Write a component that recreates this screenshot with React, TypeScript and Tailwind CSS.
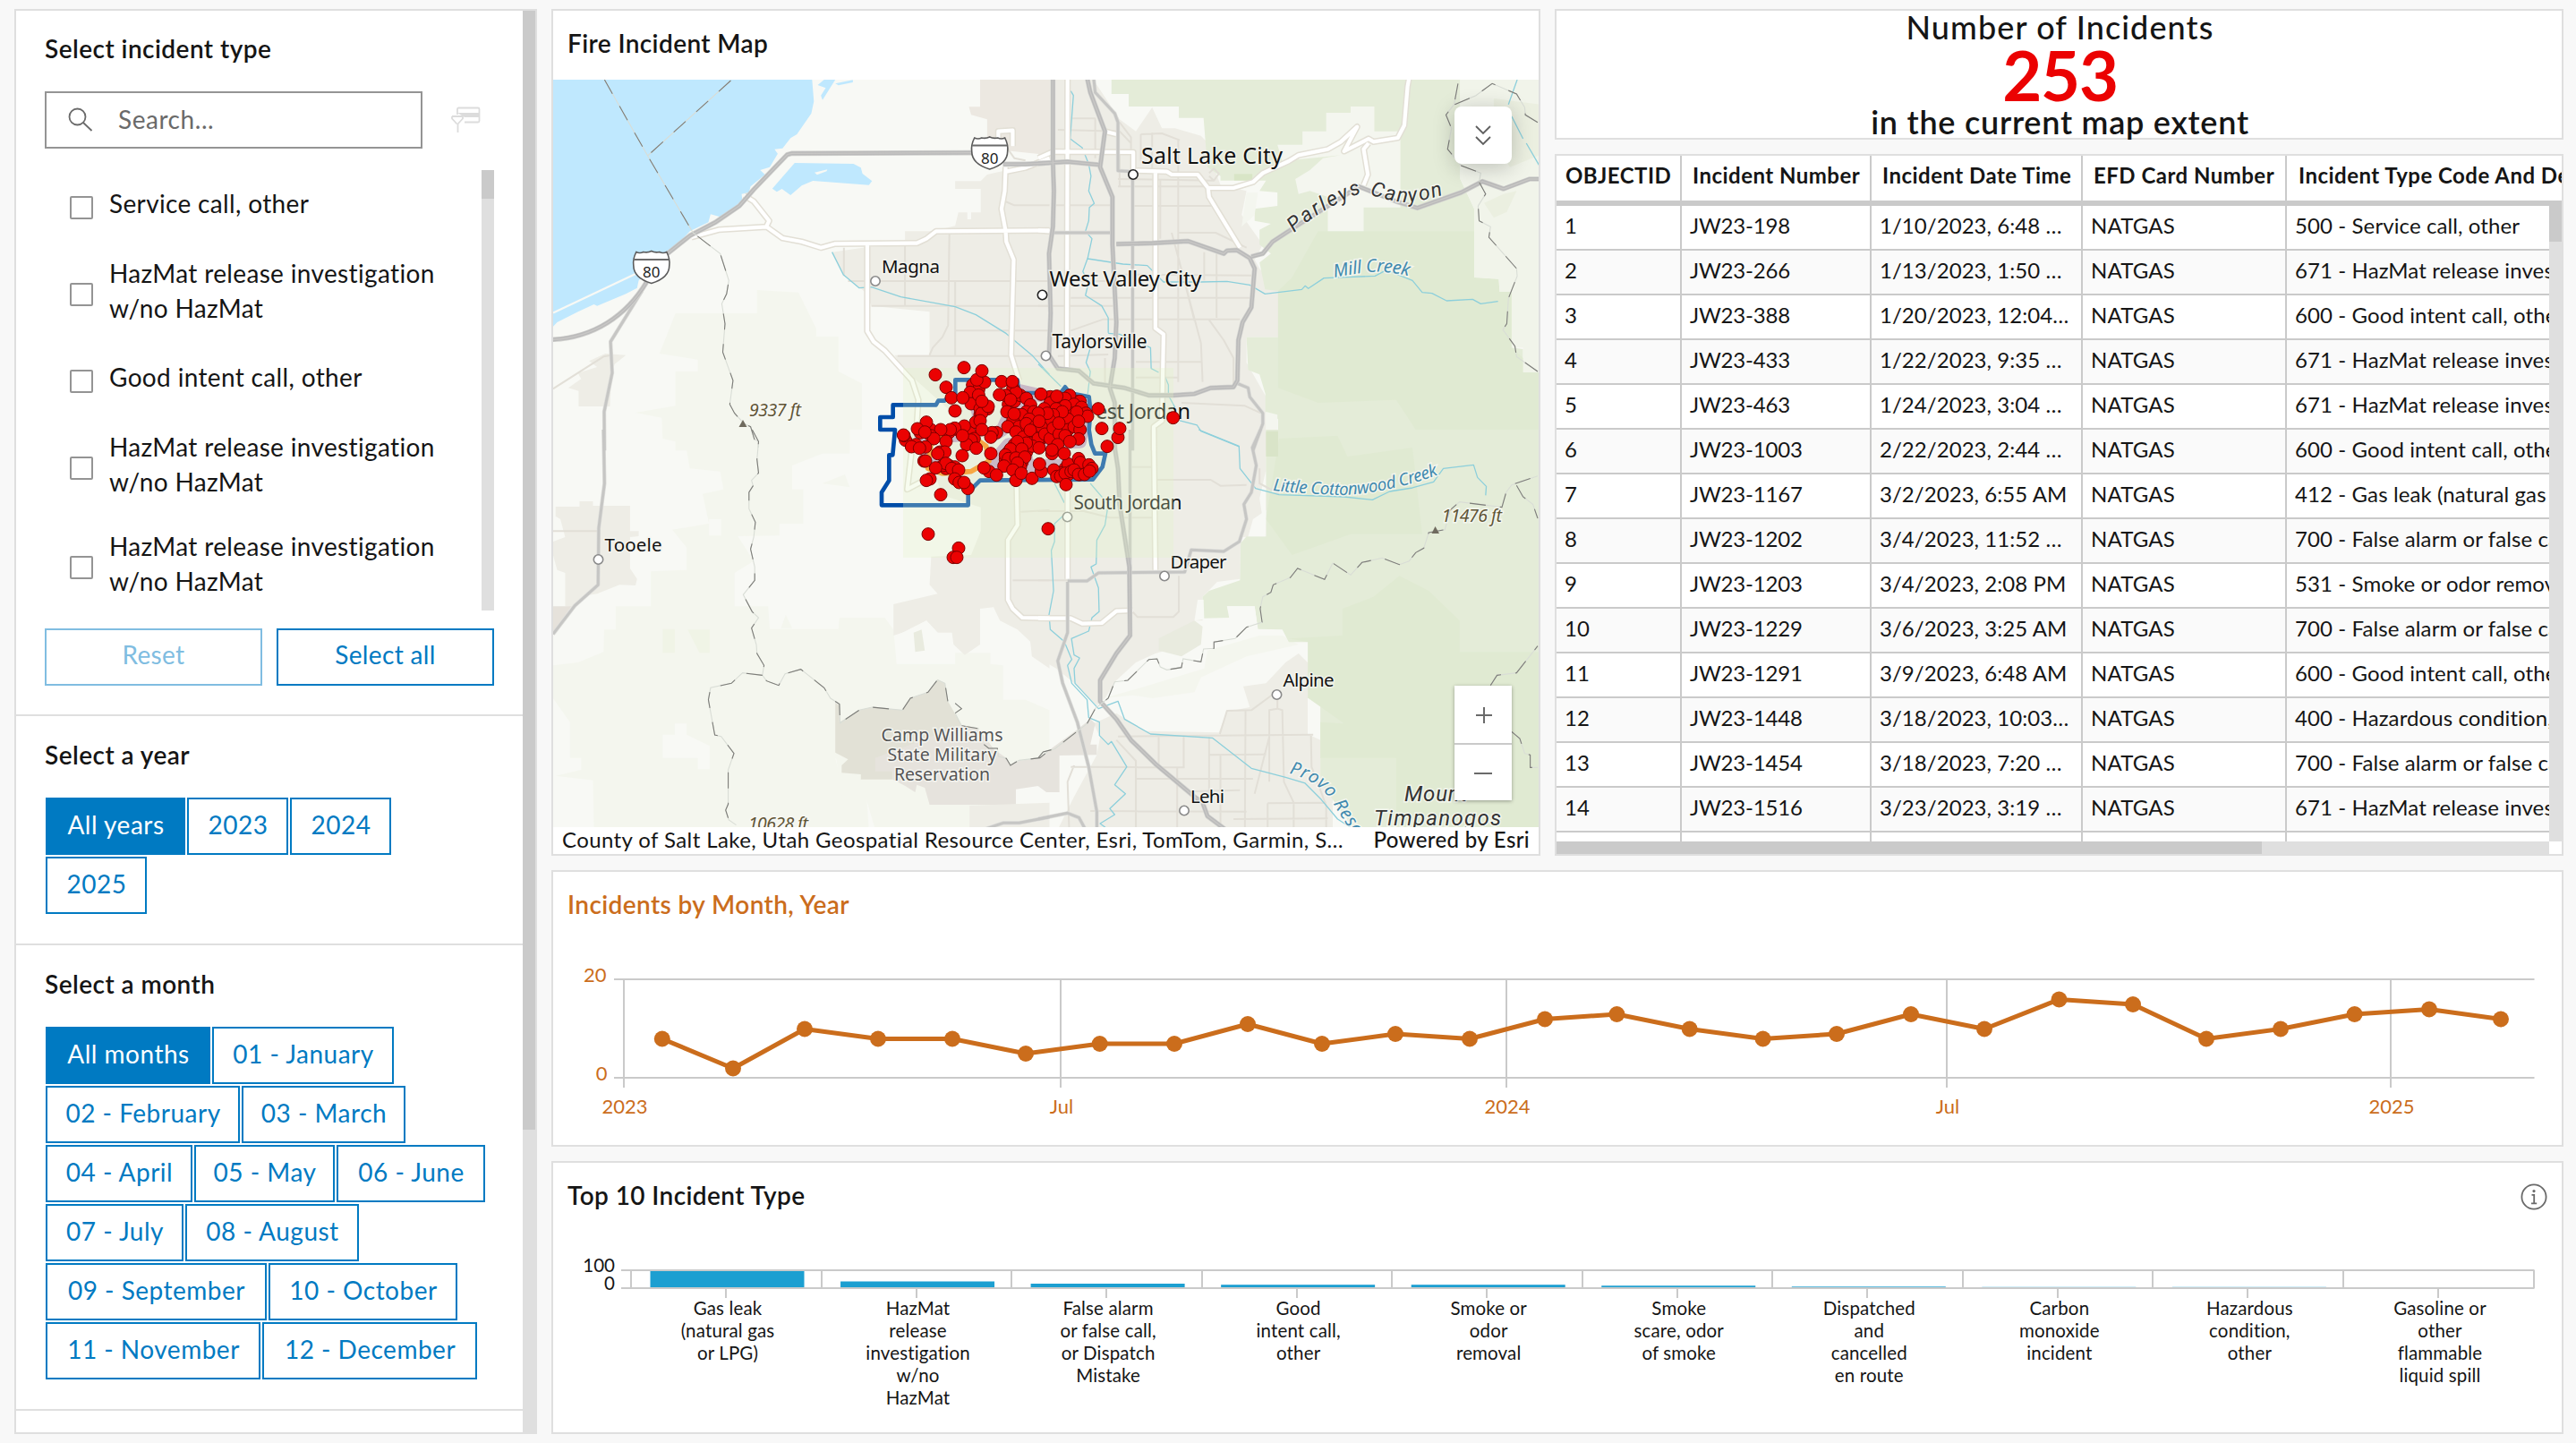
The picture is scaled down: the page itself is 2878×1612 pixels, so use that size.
import type { ReactNode } from "react";
import clsx from "clsx";

const FONT = "font-['Lato','Open_Sans',sans-serif]";

/* ---------- Sidebar ---------- */

const incidentTypes = [
  "Service call, other",
  "HazMat release investigation w/no HazMat",
  "Good intent call, other",
  "HazMat release investigation w/no HazMat",
  "HazMat release investigation w/no HazMat",
];

const yearRows: [string, string][][] = [
  [["All years", "w-[156px]"], ["2023", "w-[113px]"], ["2024", "w-[113px]"]],
  [["2025", "w-[113px]"]],
];

const monthRows: [string, string][][] = [
  [["All months", "w-[184px]"], ["01 - January", "w-[203px]"]],
  [["02 - February", "w-[217px]"], ["03 - March", "w-[183px]"]],
  [["04 - April", "w-[164px]"], ["05 - May", "w-[157px]"], ["06 - June", "w-[166px]"]],
  [["07 - July", "w-[154px]"], ["08 - August", "w-[194px]"]],
  [["09 - September", "w-[247px]"], ["10 - October", "w-[211px]"]],
  [["11 - November", "w-[240px]"], ["12 - December", "w-[240px]"]],
];

function SectionTitle({ children }: { children: ReactNode }) {
  return <h2 className="h-10 text-[28px] leading-10 font-semibold tracking-[0.45px] whitespace-nowrap">{children}</h2>;
}

function PillRows({ rows }: { rows: [string, string][][] }) {
  return (
    <div className="mt-7 ml-px flex flex-col gap-0.5">
      {rows.map((row, i) => (
        <div key={i} className="flex gap-0.5">
          {row.map(([label, width], j) => (
            <button
              key={label}
              className={clsx(
                "flex h-16 items-center justify-center border-2 border-[#007ac2] pb-1 pl-px text-[28px] leading-9 tracking-[0.5px] whitespace-nowrap",
                width,
                i === 0 && j === 0 ? "bg-[#007ac2] text-white" : "bg-white text-[#007ac2]",
              )}
            >
              {label}
            </button>
          ))}
        </div>
      ))}
    </div>
  );
}

function Sidebar() {
  return (
    <aside className="flex h-[1592px] w-[584px] shrink-0 border-2 border-[#dfdfdf] bg-white">
      <div className="flex min-w-0 flex-1 flex-col">
        <section className="h-[788px] border-b-2 border-[#dfdfdf] px-8 pt-[22px]">
          <SectionTitle>Select incident type</SectionTitle>
          <div className="mt-7 flex items-center">
            <div className="flex h-16 w-[422px] items-center border-2 border-[#949494] pl-6">
              <svg width="28" height="28" viewBox="0 0 28 28" fill="none" stroke="#6a6a6a" strokeWidth="1.8">
                <circle cx="10.5" cy="10.5" r="9" />
                <path d="M17 17 L26.5 26" />
              </svg>
              <span className="ml-7 pb-0.5 text-[28px] leading-9 tracking-[0.55px] text-[#6a6a6a]">Search...</span>
            </div>
            <svg className="ml-8" width="33" height="30" viewBox="0 0 33 30" fill="none" stroke="#dcdcdc" strokeWidth="1.8">
              <path d="M7 9 V3 Q7 1.5 8.5 1.5 H30 Q31.5 1.5 31.5 3 V16 Q31.5 17.5 30 17.5 H15" />
              <path d="M7 7 H31.5 V12 H15" fill="#dcdcdc" stroke="none" />
              <path d="M1 11 H13 V13.5 L7.5 19.5 V29 M1 11 V13.5 L6.5 19.5" />
            </svg>
          </div>
          <div className="mt-6 flex h-[492px]">
            <div className="flex h-[492px] flex-1 flex-col overflow-hidden pl-7">
              {incidentTypes.map((label, i) => (
                <label key={i} className={clsx("flex shrink-0 items-center gap-[18px]", label.length > 30 ? "h-[111px]" : "h-[83px]")}>
                  <span className="size-[26px] shrink-0 rounded-[2px] border-2 border-[#949494] bg-white" />
                  <span className="w-[380px] pb-2 text-[28px] leading-[39px] tracking-[0.35px]">{label}</span>
                </label>
              ))}
            </div>
            <div className="h-full w-3.5 bg-[#dfdfdf]">
              <div className="h-8 bg-[#cacaca]" />
            </div>
          </div>
          <div className="mt-5 flex gap-4">
            <button className="h-16 w-[243px] border-2 border-[#80bde1] pb-1.5 text-[28px] leading-9 tracking-[0.35px] text-[#80bde1]">Reset</button>
            <button className="h-16 w-[243px] border-2 border-[#007ac2] pb-1.5 text-[28px] leading-9 tracking-[0.35px] text-[#007ac2]">Select all</button>
          </div>
        </section>
        <section className="h-64 border-b-2 border-[#dfdfdf] pt-[23px] pl-8">
          <SectionTitle>Select a year</SectionTitle>
          <PillRows rows={yearRows} />
        </section>
        <section className="h-[520px] border-b-2 border-[#dfdfdf] pt-[23px] pl-8">
          <SectionTitle>Select a month</SectionTitle>
          <PillRows rows={monthRows} />
        </section>
      </div>
      <div className="w-3.5 bg-[#dfdfdf]">
        <div className="h-[1250px] bg-[#cacaca]" />
      </div>
    </aside>
  );
}

/* ---------- Map ---------- */

type Tile = {
  transform: string;
  areas: [string, string][];
  minor: string;
  white: string;
  state: string;
  highway: string;
  stream: string;
  boundary: string;
};

const URBAN = "#eeede6";
const PALE = "#f4f6ee";
const FOREST = "#e4ecd8";
const FOREST_DARK = "#e0ead2";
const BARE = "#f8f9f5";

const tiles: Tile[] = [
  {
    transform: "translate(610 0) scale(0.35714 0.33333)",
    areas: [
      [URBAN, "M1280,607 1360,607 1380,585 1420,575 1575,550 1575,1510 1400,1510 1330,1440 1117,1235 1090,1190 1200,1190 1200,1045 1060,1030 1018,1025 1000,980 930,920 895,845 1005,828 1123,822 1123,775 1210,775 1280,757 1290,712 1318,712 1318,735 1330,735 1330,712 1360,712 1360,633 1280,633Z"],
      ["#ece8e1", "M1358,267 1575,267 1575,520 1400,500 1380,480 1380,400 1330,385 1323,358 1358,358Z"],
      [PALE, "M405,1050 660,1050 660,972 790,980 845,1100 845,1128 915,1128 915,1245 988,1285 988,1440 950,1440 950,1510 405,1510 405,1480 365,1470 362,1400 280,1383 405,1360 405,1245 475,1245 475,1205 355,1185Z"],
      [URBAN, "M70,1300 110,1270 100,1250 160,1230 135,1210 185,1185 250,1190 215,1220 205,1250 200,1362 102,1362 102,1310Z"],
      ["#bfe8fe", "M22,260 832,260 838,340 830,380 785,450 765,463 740,497 715,500 725,515 700,560 670,570 685,585 640,625 635,645 612,650 615,680 550,728 515,718 508,745 450,775 390,845 290,940 285,965 250,985 160,1025 150,1020 100,1045 35,1080 22,1095Z"],
      ["#bfe8fe", "M708,632 778,546 962,549 985,562 990,582 1020,607 1010,620 835,606 800,622 765,654 738,633 722,643Z"],
      ["#bfe8fe", "M850,285 870,267 905,267 865,335 860,320 875,295Z M905,280 960,268 960,276 915,286Z"],
      [BARE, "M840,578 880,568 878,574 848,586Z"],
    ],
    minor: "M932,830 932,925 M1123,825 1123,1025 M945,942 1575,942 M1018,1025 1575,1025 M1262,780 1258,1090 1240,1130 1210,1165 1200,1190 M1280,942 1280,1190 M1280,1108 1575,1108 M1100,1193 1575,1193 M1437,675 1465,688 1575,688 M22,1303 180,1195 205,1190 M1445,500 1465,530 1500,538",
    white: "M455,795 540,770 690,760 740,798 800,810 860,830 905,817 1160,815 1190,800 1220,775 1575,772 M620,655 650,675 698,740 690,758 M1438,560 1435,640 1425,700 1438,775 1440,810 1463,870 1455,1190 1480,1275 M1005,820 1005,1110 1025,1145 1060,1175 1145,1275 1165,1340 1160,1420 1150,1510 M1415,480 1415,440 1460,437 1460,490 M1440,575 1500,562 1575,530",
    state: "M300,975 202,1145 207,1250 182,1380 183,1510",
    highway: "M22,1138 C150,1130 250,1060 315,945 M380,850 L450,790 530,745 605,690 650,635 755,518 770,514 1335,512 M1430,550 1500,550 1575,546",
    stream: "M895,845 930,920 980,965 1018,962 1110,995 1280,1028 1345,1055 1440,1118 1520,1190 1575,1255",
    boundary: "M183,267 318,522 460,780 505,817 545,850 572,940 565,985 550,1018 560,1085 553,1180 585,1275 575,1355 590,1385 620,1420 640,1430 652,1472 665,1480 664,1500 M578,270 318,522",
  },
  {
    transform: "translate(1160 0) scale(0.3635 0.33333)",
    areas: [
      [URBAN, "M0,260 165,260 250,400 300,440 350,360 380,430 420,430 500,455 540,500 540,560 560,620 640,640 625,720 690,820 665,870 680,900 737,975 737,1130 640,1130 640,1215 700,1330 700,1510 0,1510Z"],
      ["#ece8e1", "M0,260 35,260 35,520 0,535Z"],
      [FOREST, "M225,260 1297,260 1297,600 1340,700 1340,930 1415,935 1418,978 1455,978 1455,1165 1490,1170 1490,1248 1540,1248 1540,1510 700,1510 700,1450 737,1450 737,1405 698,1380 698,1320 680,1255 645,1240 640,1130 737,1130 737,975 697,970 680,880 715,850 680,820 680,770 715,750 665,740 665,700 735,690 735,645 680,640 700,605 560,605 560,590 520,560 508,395 432,395 432,357 278,357 278,315 225,315Z"],
      [FOREST_DARK, "M860,775 1340,775 1340,930 1415,935 1418,978 1455,978 1455,1165 1540,1250 1540,1510 1280,1510 1160,1440 1100,1340 860,1350 737,1300 737,975 780,930Z"],
      ["#f4f6ef", "M885,378 960,378 960,357 1033,357 1033,440 1113,440 1113,695 1000,695 1000,775 890,775 890,660 835,640 800,650 790,600 835,570 875,530 930,520 750,540 735,485 812,485 812,440 885,440Z"],
      ["#f1f4ea", "M1297,260 1540,260 1540,1248 1490,1248 1490,1165 1455,1165 1455,978 1418,978 1415,935 1340,930 1340,700 1297,600Z"],
      ["#ebefe0", "M1400,330 1540,350 1540,520 1450,560 1400,480Z M1370,680 1430,650 1470,640 1440,710 1400,730Z"],
      ["#d8e5c6", "M602,583 658,583 658,605 602,605Z"],
      ["#f4f6ef", "M640,645 675,645 665,720 625,760Z M700,1380 735,1390 735,1450 700,1450Z"],
    ],
    minor: "M55,688 228,688 M245,625 510,625 M290,690 540,690 M375,600 375,800 M430,590 430,1280 M430,780 545,780 640,830 M510,845 510,940 M548,850 548,1065 M235,920 655,923 M100,998 650,998 M0,1025 230,1025 M100,1108 200,1070 620,1070 M430,860 480,1075 M410,780 500,1150 505,1280 M525,1072 570,1140 600,1200 600,1290 M60,1193 215,1188 M300,1213 505,1213 M300,1265 430,1265 M205,1200 205,1300 M105,397 175,397 M175,395 175,530 M315,450 315,540 M430,470 430,600 M350,445 350,570 M315,450 380,447 435,470 M60,435 250,440 285,480 M250,625 250,500 M245,600 540,605 M250,410 285,460 285,500 M440,1350 635,1360 685,1385 M0,942 230,942 M525,580 540,565 555,582 540,605 525,590",
    white: "M90,260 88,1235 M0,530 45,508 292,510 292,572 M300,572 395,575 410,585 490,585 522,630 600,630 660,610 690,580 770,540 800,520 890,500 930,475 980,425 940,507 1015,465 1030,475 1105,462 1125,420 1135,290 1140,260 M522,630 525,660 620,830 M360,575 360,1100 385,1120 380,1410 355,1430 355,1510 M0,772 35,775 M1015,480 1000,500 1013,585 1000,620 M205,440 240,450",
    state: "M170,260 175,310 235,380 245,410 245,572 290,575 290,1510 M40,780 220,780 M612,1285 645,1300 650,1330 690,1385 690,1420 660,1510",
    highway: "M150,260 160,310 205,440 190,560 228,660 228,820 240,1080 235,1200 220,1300 235,1350 235,1510 M45,260 45,540 48,640 45,760 33,850 38,1050 33,1190 60,1235 125,1243 170,1285 265,1300 340,1325 415,1325 480,1320 530,1300 600,1297 612,1275 615,1140 628,1080 655,1030 665,900 650,865 610,838 580,840 570,850 460,808 350,815 240,818 M0,548 90,542 185,552 M655,860 690,850 720,810 790,760 985,625 1100,675 1165,697 1300,645 1365,608 1430,633 1510,600 1540,600",
    stream: "M100,305 108,320 98,465 135,495 155,550 162,590 155,640 172,682 157,695 155,740 145,775 165,800 152,865 137,910 155,945 145,990 195,1025 215,1065 215,1115 M152,867 260,885 335,890 385,945 500,945 580,943 650,955 697,985 810,970 820,958 830,967 878,932 1035,925 1070,905 1150,940 1180,980 1210,983 1255,1008 1335,1003 1360,1018 1413,1010 M215,1117 250,1120 345,1165 347,1235 370,1248 M0,1220 70,1295 M160,1165 147,1215 160,1245 152,1320 M385,1250 400,1290 400,1325 420,1365 M435,1410 488,1425 500,1445 617,1497 M1472,267 1445,350 M1455,390 1490,465 M1500,480 1540,555",
    boundary: "M1290,280 1278,350 1253,385 1270,430 1258,500 1300,555 1360,580 1355,610 1375,650 1352,690 1355,740 1390,760 1385,795 1470,900 1472,925 1445,1000 1440,1085 1428,1105 1465,1160 1470,1195 1535,1245 M1280,350 1345,320 1395,280 1470,315 1495,360 1497,385 1535,410",
  },
  {
    transform: "translate(610 480) scale(0.35714 0.33333)",
    areas: [
      [PALE, "M22,790 100,780 180,745 182,670 218,670 218,592 328,592 328,475 440,470 440,395 395,335 510,315 490,215 555,200 545,140 450,130 440,70 405,40 405,0 950,0 950,80 865,80 770,120 770,200 805,200 805,315 730,315 730,355 600,357 650,440 590,480 590,592 695,592 700,668 915,668 918,630 1060,630 1087,670 1097,785 1280,785 1280,748 1390,748 1390,785 1430,790 1430,905 1500,905 1575,940 1575,1140 1470,1200 1470,1260 1330,1300 1330,1340 1030,1340 990,1195 905,1100 960,1340 150,1340 147,1175 30,1160 110,1140 110,1100 75,1100 75,980 22,900Z"],
      [BARE, "M365,1022 403,1022 403,985 440,985 440,1022 512,1060 512,1138 475,1138 475,1100 365,1100Z M510,300 548,300 548,355 510,355Z"],
      [PALE, "M735,665 750,620 770,665Z M865,180 935,150 950,193Z M905,1080 1000,1180 1010,1340 940,1340Z"],
      ["#f0f4e6", "M365,668 403,668 403,748 365,748Z M443,670 512,670 512,748 480,748Z M1125,705 1170,650 1255,722 1160,745Z"],
      [URBAN, "M30,258 105,258 105,240 147,240 147,255 263,255 263,340 290,340 290,357 263,360 263,465 285,500 280,522 230,520 160,550 130,555 85,595 60,592 60,480 35,470 22,420 22,375 60,360 45,300 30,290Z"],
      ["#e6e2db", "M22,592 80,592 22,680Z"],
      [URBAN, "M1330,0 1575,0 1575,800 1520,760 1515,710 1475,670 1420,640 1400,595 1358,600 1358,720 1310,755 1275,720 1270,680 1225,680 1190,640 1130,675 1087,690 1087,585 1225,550 1200,520 1205,425 1330,420 1360,340 1360,260 1240,220 1200,100Z"],
      [BARE, "M1097,690 1190,640 1225,680 1270,690 1280,785 1097,785Z"],
      ["#e9ebdf", "M1150,680 1175,670 1185,740 1155,745Z"],
      ["#e2e1d6", "M905,915 918,925 918,980 980,940 1020,930 1115,940 1140,900 1195,880 1225,838 1248,850 1257,910 1300,990 1355,1005 1400,1070 1085,1100 1085,1172 985,1172 985,1155 925,1150 925,1125 945,1105 905,1082Z"],
      ["#e6e3dd", "M1030,1100 1300,990 1355,1005 1400,1070 1440,1100 1453,1125 1480,1110 1545,1100 1575,1085 1575,1190 1535,1195 1470,1205 1470,1257 1200,1257 1185,1200 1160,1190 1155,1215 1125,1195 1085,1172 1085,1145 1030,1145Z"],
      [URBAN, "M1325,1260 1575,1250 1575,1340 1325,1340Z"],
    ],
    minor: "M22,340 160,340 M1485,275 1575,270 M1460,505 1575,505",
    white: "M1472,180 1475,320 1445,370 1445,570 1460,600 1490,630 1575,632 M1145,60 1130,200 1200,160",
    state: "M180,0 183,180 165,330 163,520 90,590 22,685 M1370,1340 1430,1318 1480,1318 1575,1298",
    highway: "",
    stream: "",
    boundary: "M645,0 665,40 660,100 665,145 643,170 648,188 635,210 635,265 655,310 650,360 640,400 653,460 653,505 617,553 645,610 665,630 643,665 658,720 660,750 682,790 677,823 690,842 728,857 748,818 797,803 870,865 890,900 918,920 920,983 980,940 1020,930 1115,940 1140,900 1195,880 1225,838 1248,850 1257,910 M1280,917 1300,935 1280,950 1300,992 1355,1002 M1370,1055 1385,1068 1412,1068 1415,1095 1440,1102 1453,1125 1480,1108 1545,1100 1568,1080 M677,823 615,815 580,850 515,865 508,905 528,1023 548,1028 588,1085 570,1140 570,1255 562,1275 572,1308 595,1325",
  },
  {
    transform: "translate(1160 480) scale(0.3635 0.33333)",
    areas: [
      [URBAN, "M0,0 700,0 700,135 680,230 698,358 622,360 620,500 550,510 505,560 505,640 480,640 455,720 360,750 300,780 240,840 205,900 180,925 100,840 55,800 0,765Z"],
      [PALE, "M200,900 330,860 510,800 520,740 680,690 750,690 800,720 640,760 500,830 480,880 350,900 290,890Z"],
      [URBAN, "M170,985 240,950 330,1010 555,1015 580,945 650,930 630,860 700,850 760,780 800,750 828,780 828,1020 867,1040 867,1180 905,1230 905,1340 60,1340 110,1230 180,1090 190,1030Z"],
      ["#e6e3dd", "M0,1100 120,1005 160,970 175,985 160,1055 180,1055 180,1090 65,1092 65,1215 25,1215 0,1195Z"],
      [FOREST, "M700,0 1540,0 1540,1340 970,1340 905,1240 867,1180 867,900 828,900 828,712 770,712 750,670 675,668 665,592 580,592 590,630 505,632 505,560 525,540 620,505 622,380 640,358 700,358Z"],
      [FOREST_DARK, "M770,700 935,690 935,600 1030,560 1110,490 1200,540 1295,640 1295,745 1540,745 1540,1340 1100,1340 1100,1100 867,1100 867,980 940,985 830,900 830,712Z"],
      [FOREST_DARK, "M740,30 920,20 950,90 1150,60 1180,350 960,350 780,420 700,300Z"],
      ["#d9e4c8", "M700,5 737,5 737,90 700,90Z"],
      [BARE, "M480,640 510,635 508,570 490,570Z M580,592 665,592 675,668 590,650Z M700,270 660,300 645,358 698,358Z"],
      ["#e9ebdf", "M370,700 480,640 505,660 500,720 440,760 370,740Z"],
    ],
    minor: "M0,273 140,273 220,295 350,295 M285,125 350,125 M365,168 530,168 560,188 640,185 M0,505 90,505 M432,490 432,610 415,628 305,628 290,610 M245,1028 845,1022 M240,1040 300,1110 300,1340 M370,1030 370,1130 M447,1030 447,1130 M100,1130 450,1132 M95,1340 90,1180 110,1125 M300,1170 660,1170 M525,1030 525,1230 M560,1090 560,1340 M637,940 635,1340 M558,1020 580,942 655,940 720,888 M710,1180 710,940 735,935 750,940 755,1180 785,1250 785,1340 M710,1030 665,1220 M735,900 735,935 M525,1090 700,1088 M705,1252 885,1250 M705,1252 705,1340 M160,1278 640,1280 M600,1305 890,1303 M838,1022 840,1130 885,1260 885,1340 M480,1212 620,1208 M427,1130 427,1340 M680,130 680,180 740,215",
    white: "M90,195 90,500 M355,0 360,470 M0,632 100,632 135,650 195,648 240,608 290,606",
    state: "M282,0 282,470 M90,507 150,507 185,480 450,477 470,403 570,408 618,375 640,300 632,250 655,210 670,120 658,60 683,0 M90,510 90,680 60,775 75,850 120,980 155,1130 180,1280 180,1340 M0,1305 90,1285 125,1300 145,1340",
    highway: "M235,0 235,60 245,130 250,250 280,460 282,690 240,750 190,840 190,910 240,970 285,1040 360,1120 480,1230 505,1250 520,1295 575,1340",
    stream: "M493,0 617,55 620,130 668,197 740,218 940,225 1027,235 1080,207 1150,195 1215,175 1245,130 1338,118 1350,160 1377,190 1375,220 M50,180 80,245 M80,285 50,315 50,375 40,405 47,540 33,620 37,670 80,710 103,770 90,790 103,850 150,905 155,965 188,980 188,1025 215,1055 225,1045 250,1090 272,1130 235,1190 268,1220 220,1270 235,1290 190,1320 215,1340 M160,180 215,250 205,320 180,370 178,450 162,460 185,530 187,610 165,630 155,675 102,700 110,755 127,765 110,800 113,850 185,935 245,910 265,970 345,1020 535,1033 655,1135 760,1165 820,1185 870,1240 920,1305 970,1340",
    boundary: "M0,1100 15,1080 50,1070 150,985 175,935 215,900 235,845 275,840 340,770 365,768 375,795 395,805 440,797 445,768 500,778 508,735 540,733 540,712 605,700 640,662 688,645 682,600 690,560 715,545 722,520 775,495 797,465 880,502 905,447 960,487 995,445 1057,430 1110,452 1140,440 1160,412 1185,397 1200,345 1250,335 1265,270 1295,242 1425,260 1438,210 1455,185 1535,155 M1470,187 1490,225 1520,250 1535,297 M1390,857 1410,823 1470,815 1535,725 M1455,1012 1480,1035 1495,1085 1512,1090 1512,1132 1535,1132",
  },
];

const incidents =
  "640,190 655,200 670,205 650,215 690,210 700,235 715,225 735,205 745,240 670,250 655,265 690,280 710,280 725,260 640,285 620,285 600,300 585,315 610,330 640,310 560,310 540,300 550,350 575,345 600,345 520,350 500,375 530,380 560,375 540,400 510,410 545,410 490,400 500,240 530,250 500,215 520,205 540,185 395,150 385,165 400,200 395,215 405,250 400,270 415,235 430,230 300,310 330,300 370,310 385,330 240,300 205,310 190,350 270,375 300,420 320,425 290,430 690,430 700,450 720,420 740,450 765,430 700,415 675,445 740,430 380,150 400,165 372,175 375,213 400,184 405,230 410,245 432,222 411,205 420,141 394,133 411,103 351,92 255,116 291,158 309,193 347,193 321,237 515,160 525,175 490,185 477,139 513,139 470,183 507,200 560,195 574,217 640,210 609,181 620,230 705,185 690,195 662,188 740,205 720,215 745,225 760,245 765,255 710,245 729,241 685,255 700,265 690,220 660,230 680,240 650,250 637,268 630,245 560,240 585,240 600,245 545,250 570,265 495,240 515,270 519,247 535,290 560,280 590,290 610,290 603,272 498,290 525,308 550,325 573,302 600,330 622,315 640,330 650,295 670,315 700,300 720,290 690,320 740,300 735,272 669,278 735,331 706,340 665,350 646,380 646,368 580,355 560,345 530,340 603,361 507,365 545,365 490,385 500,397 525,395 555,392 540,425 530,412 485,422 515,435 525,470 543,446 579,463 610,440 604,415 687,380 652,435 662,457 675,455 690,446 693,484 710,440 735,397 741,410 720,435 735,450 770,418 780,430 755,450 772,439 435,440 418,428 460,452 441,380 460,310 445,310 441,325 390,275 405,270 411,300 352,288 320,295 305,300 273,300 375,335 360,350 346,320 392,362 345,387 240,320 250,330 291,339 225,275 195,297 220,308 155,335 150,320 148,318 175,357 222,358 202,362 287,375 263,380 217,405 222,405 280,420 290,413 256,428 310,430 333,435 320,465 335,477 364,497 351,477 237,465 225,470 273,518 231,650 333,697 315,728 327,728 633,632 801,230 813,296 867,326 873,296 831,356 1052,260"
    .split(" ")
    .map((p) => p.split(",").map(Number));

const layers: { key: "minor" | "white" | "state" | "highway" | "stream"; strokes: [string, number][] }[] = [
  { key: "minor", strokes: [["#e2dfd7", 2]] },
  { key: "stream", strokes: [["#8ccfdb", 1.3]] },
  { key: "white", strokes: [["#e2dfd5", 7.2], ["#ffffff", 4.2]] },
  { key: "state", strokes: [["#dededb", 4.4], ["#c6c6c4", 3]] },
  { key: "highway", strokes: [["#d2d2cf", 5.6], ["#bababa", 4.2], ["#c8c7c5", 1.4]] },
];

function Tiled({ children }: { children: (t: Tile) => ReactNode }) {
  return (
    <>
      {tiles.map((t) => (
        <g key={t.transform} transform={t.transform}>
          {children(t)}
        </g>
      ))}
    </>
  );
}

function Shield({ x, y }: { x: number; y: number }) {
  return (
    <g transform={`translate(${x} ${y})`}>
      <path
        d="M-17,-17 Q-13,-15 -9,-17 Q-4,-16 0,-18 Q4,-16 9,-17 Q13,-15 17,-17 Q21,-9 20,-2 C20,9 10,15 0,18 C-10,15 -20,9 -20,-2 Q-21,-9 -17,-17Z"
        fill="#fff"
        stroke="#5b5b5b"
        strokeWidth="1.6"
      />
      <path d="M-19.5,-8.5 H19.5" stroke="#6b6b6b" strokeWidth="2" />
      <text x="0" y="11.5" textAnchor="middle" fontSize="17" fill="#222">80</text>
    </g>
  );
}

const cities: [string, number, number, number, number, number, number, boolean][] = [
  ["Salt Lake City", 1275, 183, 158, 25, 1266, 195, true],
  ["West Valley City", 1172.5, 319.5, 170, 24, 1164.5, 329.5, true],
  ["Taylorsville", 1175.5, 388.5, 106, 21, 1168.5, 397.5, false],
  ["South Jordan", 1199.5, 568.5, 121, 21, 1192.5, 577.5, false],
  ["Draper", 1307.5, 634.5, 63, 20.5, 1301, 643.5, false],
  ["Alpine", 1433.5, 767, 57, 20.5, 1426.5, 776, false],
  ["Lehi", 1330, 896.5, 38, 20.5, 1323, 905.5, false],
  ["Magna", 985, 304.5, 65, 20.5, 978, 314, false],
  ["Tooele", 675.5, 616, 64, 20.5, 668.5, 625, false],
];

function BaseMap() {
  return (
    <svg className="block h-[835px] w-[1101px] font-['Noto_Sans',sans-serif]" viewBox="618 89 1101 835">
      <rect x="618" y="89" width="1101" height="835" fill={BARE} />
      <Tiled>{(t) => t.areas.map(([fill, d], i) => <path key={i} d={d} fill={fill} />)}</Tiled>
      <path d="M618,349.5 L710,306" stroke={BARE} strokeWidth="2.4" />
      {layers.map(({ key, strokes }) =>
        strokes.map(([stroke, width]) => (
          <Tiled key={key + stroke}>
            {(t) => (
              <path d={t[key]} fill="none" stroke={stroke} strokeWidth={width} strokeLinejoin="round" vectorEffect="non-scaling-stroke" />
            )}
          </Tiled>
        )),
      )}
      <Tiled>
        {(t) => <path d={t.boundary} fill="none" stroke="#d9ddd6" strokeWidth="1.1" vectorEffect="non-scaling-stroke" />}
      </Tiled>
      <Tiled>
        {(t) => (
          <path d={t.boundary} fill="none" stroke="#7d7d79" strokeWidth="1.1" strokeDasharray="18 16" vectorEffect="non-scaling-stroke" />
        )}
      </Tiled>

      <g fill="#6f6a5e">
        <path d="M830,469 L834.5,477 H825.5Z M1603.5,588 L1608,596 H1599.5Z" />
      </g>
      <Shield x={1105.7} y={171} />
      <Shield x={727.8} y={298.5} />

      <g fill="none" stroke="none">
        <path id="mill" d="M1491,310 Q1510,306 1530,304 T1580,310" />
        <path id="cottonwood" d="M1422,548 Q1460,552 1500,553 Q1550,551 1608,530" />
        <path id="provo" d="M1440,864 Q1474,872 1490,898 Q1502,920 1530,955" />
        <path id="parleys" d="M1446,260 Q1474,234 1522,215" />
        <path id="canyon" d="M1530,217 Q1556,226 1574,226 Q1592,224 1618,216" />
      </g>
      <g stroke={BARE} strokeWidth="3" strokeOpacity="0.8" paintOrder="stroke" fontStyle="italic">
        <g fill="#4189ae" fontSize="20">
          <text fontSize="20"><textPath href="#mill" textLength="84">Mill Creek</textPath></text>
          <text fontSize="19"><textPath href="#cottonwood" textLength="188">Little Cottonwood Creek</textPath></text>
          <text letterSpacing="1"><textPath href="#provo">Provo Reser</textPath></text>
        </g>
        <g fill="#333" fontSize="24" fontFamily="'Roboto','Noto Sans',sans-serif">
          <text fontSize="23"><textPath href="#parleys" textLength="88">Parleys</textPath></text>
          <text fontSize="23"><textPath href="#canyon" textLength="85">Canyon</textPath></text>
          <text x="1569" y="894.5" textLength="70">Mount</text>
          <text x="1535" y="921.5" textLength="142">Timpanogos</text>
        </g>
        <g fill="#5f5436" fontSize="19.5">
          <text x="837" y="465" textLength="58">9337 ft</text>
          <text x="836" y="927" textLength="67">10628 ft</text>
          <text x="1610.5" y="583" textLength="67.5">11476 ft</text>
        </g>
      </g>
      <g fill="#555" fontSize="19.5" textAnchor="middle" stroke={BARE} strokeWidth="3" strokeOpacity="0.8" paintOrder="stroke">
        <text x="1052.5" y="827.5" textLength="136">Camp Williams</text>
        <text x="1052.5" y="849.5" textLength="122">State Military</text>
        <text x="1052.5" y="871.5" textLength="107">Reservation</text>
      </g>
      {cities.map(([name, x, y, length, size, cx, cy, major]) => (
        <g key={name}>
          <circle cx={cx} cy={cy} r="5.2" fill="#fff" stroke={major ? "#222" : "#8a8a8a"} strokeWidth="1.6" />
          <text x={x} y={y} fontSize={size} textLength={length} fill="#111" stroke="#f5f5f0" strokeWidth="3" strokeOpacity="0.8" paintOrder="stroke">
            {name}
          </text>
        </g>
      ))}
      <text x="1330" y="467.5" textAnchor="end" fontSize="23.5" textLength="106" fill="#111">est Jordan</text>

      <g transform="translate(960 380) scale(0.33333)" fill="none" strokeLinejoin="round">
        <path
          d="M400,120 380,170 400,250 390,310 320,320 200,300 230,400 300,430 M430,330 480,300 540,170 760,220 740,340 500,350 440,420 600,420 700,420 790,440 M560,400 540,200"
          stroke="#bfa2c6"
          strokeWidth="44"
        />
        <path d="M230,430 280,447 375,440 435,405 425,355 390,330 300,300 240,350 Z" stroke="#ff8a12" strokeWidth="17" />
        <path
          d="M113,217 257,217 265,203 285,203 300,190 322,190 322,133 530,133 535,177 675,177 690,157 705,177 770,190 775,240 770,300 778,350 790,380 825,380 815,425 783,467 405,470 385,490 365,515 365,553 75,553 75,510 100,470 100,385 112,385 120,300 70,300 70,258 113,258 Z"
          stroke="#004da8"
          strokeWidth="14"
        />
      </g>
      <rect x="1009" y="411" width="302" height="212" fill="rgb(228 246 196)" fillOpacity="0.28" />
      <g fill="#eb0202" stroke="#7c0000" strokeWidth="1">
        {incidents.map(([x, y], i) => (
          <circle key={i} cx={960 + x / 3} cy={380 + y / 3} r="7" />
        ))}
      </g>
    </svg>
  );
}

function MapPanel() {
  return (
    <section className="h-[946px] w-[1105px] border-2 border-[#dfdfdf] bg-white">
      <h2 className="h-[77px] pt-4 pl-4 text-[28px] leading-10 font-semibold tracking-[0.4px]">Fire Incident Map</h2>
      <div className="relative">
        <BaseMap />
        <button className="absolute top-[30px] right-[30px] flex size-16 items-center justify-center rounded-lg bg-white shadow-[0_4px_24px_rgba(0,0,0,0.22)]">
          <svg width="18" height="24" viewBox="0 0 18 24" fill="none" stroke="#5f5f5f" strokeWidth="1.8">
            <path d="M1,2 L9,10 L17,2 M1,14 L9,22 L17,14" />
          </svg>
        </button>
        <div className="absolute right-[30px] bottom-[30px] flex h-32 w-16 flex-col bg-white shadow-[0_1px_4px_rgba(0,0,0,0.35)]">
          <button className="flex h-16 items-center justify-center pt-0.5 pl-0.5">
            <svg width="20" height="20" viewBox="0 0 20 20" stroke="#6a6a6a" strokeWidth="2">
              <path d="M1,10 H19 M10,1 V19" />
            </svg>
          </button>
          <button className="flex h-16 items-center justify-center border-t-2 border-[#cacaca] pt-0.5">
            <svg width="20" height="20" viewBox="0 0 20 20" stroke="#6a6a6a" strokeWidth="2">
              <path d="M0,10 H20" />
            </svg>
          </button>
        </div>
      </div>
      <div className="flex h-[30px] justify-between pr-2.5 pl-2.5 text-2xl leading-[27px] whitespace-nowrap">
        <span className="tracking-[0.4px]">County of Salt Lake, Utah Geospatial Resource Center, Esri, TomTom, Garmin, S…</span>
        <span className="font-medium tracking-[0.35px]">Powered by Esri</span>
      </div>
    </section>
  );
}

/* ---------- Indicator and table ---------- */

function Indicator() {
  return (
    <section className="h-[146px] border-2 border-[#dfdfdf] bg-white pl-0.5 text-center whitespace-nowrap">
      <div className="text-4xl leading-[37px] font-medium tracking-[1.1px]">Number of Incidents</div>
      <div className="text-[76px] leading-[70px] font-bold tracking-[-1.2px] text-[#eb0202]">253</div>
      <div className="text-4xl leading-[34px] font-semibold tracking-[0.75px]">in the current map extent</div>
    </section>
  );
}

const columns = ["OBJECTID", "Incident Number", "Incident Date Time", "EFD Card Number", "Incident Type Code And Description"];
const columnWidths = ["w-[140px]", "w-[212px]", "w-[236px]", "w-[228px]", "w-[440px]"];

const rows = [
  ["1", "JW23-198", "1/10/2023, 6:48 …", "NATGAS", "500 - Service call, other"],
  ["2", "JW23-266", "1/13/2023, 1:50 …", "NATGAS", "671 - HazMat release investigation"],
  ["3", "JW23-388", "1/20/2023, 12:04…", "NATGAS", "600 - Good intent call, other"],
  ["4", "JW23-433", "1/22/2023, 9:35 …", "NATGAS", "671 - HazMat release investigation"],
  ["5", "JW23-463", "1/24/2023, 3:04 …", "NATGAS", "671 - HazMat release investigation"],
  ["6", "JW23-1003", "2/22/2023, 2:44 …", "NATGAS", "600 - Good intent call, other"],
  ["7", "JW23-1167", "3/2/2023, 6:55 AM", "NATGAS", "412 - Gas leak (natural gas or LPG)"],
  ["8", "JW23-1202", "3/4/2023, 11:52 …", "NATGAS", "700 - False alarm or false call"],
  ["9", "JW23-1203", "3/4/2023, 2:08 PM", "NATGAS", "531 - Smoke or odor removal"],
  ["10", "JW23-1229", "3/6/2023, 3:25 AM", "NATGAS", "700 - False alarm or false call"],
  ["11", "JW23-1291", "3/9/2023, 6:48 AM", "NATGAS", "600 - Good intent call, other"],
  ["12", "JW23-1448", "3/18/2023, 10:03…", "NATGAS", "400 - Hazardous condition, other"],
  ["13", "JW23-1454", "3/18/2023, 7:20 …", "NATGAS", "700 - False alarm or false call"],
  ["14", "JW23-1516", "3/23/2023, 3:19 …", "NATGAS", "671 - HazMat release investigation"],
  ["", "", "", "", ""],
];

function IncidentTable() {
  return (
    <section className="flex h-[784px] flex-col border-2 border-[#dfdfdf] bg-white text-2xl whitespace-nowrap">
      <div className="flex h-14 shrink-0 overflow-hidden border-b-[6px] border-[#cacaca] leading-[44px] font-bold tracking-[0.48px]">
        {columns.map((c, i) => (
          <div key={c} className={clsx("shrink-0 border-[#cacaca]", columnWidths[i], i < 4 && "border-r-2", i === 0 ? "pl-2.5" : i === 4 ? "pl-[13px]" : "pl-3")}>
            {c}
          </div>
        ))}
      </div>
      <div className="flex h-[710px]">
        <div className="h-[710px] w-[1109px] overflow-hidden">
          {rows.map((row, r) => (
            <div key={r} className={clsx("flex h-[50px] leading-[44px]", r % 2 ? "bg-[#fafafa]" : "bg-white")}>
              {row.map((cell, i) => (
                <div
                  key={i}
                  className={clsx(
                    "shrink-0 overflow-hidden border-b-2 border-[#cacaca] pl-[9px]",
                    columnWidths[i],
                    i < 4 && "border-r-2",
                    i === 4 && "tracking-[0.1px]",
                    i === 3 && "tracking-[0.15px]",
                    i === 2 && "tracking-[0.05px]",
                    i === 1 && "tracking-[-0.2px]",
                  )}
                >
                  {cell}
                </div>
              ))}
            </div>
          ))}
        </div>
        <div className="h-[710px] w-3.5 bg-[#dfdfdf]">
          <div className="h-10 bg-[#cacaca]" />
        </div>
      </div>
      <div className="h-3.5 w-[1109px] bg-[#dfdfdf]">
        <div className="h-3.5 w-[788px] bg-[#cacaca]" />
      </div>
    </section>
  );
}

/* ---------- Charts ---------- */

const series: [number, number][] = [
  [739.8, 8], [819, 2], [899, 10], [981, 8], [1064, 8], [1146, 5], [1228.7, 7], [1312, 7], [1394, 11],
  [1477, 7], [1559, 9], [1642, 8], [1726, 12], [1806.4, 13], [1887.7, 10], [1969.6, 8], [2052, 9],
  [2135, 13], [2217, 10], [2300.5, 16], [2383, 15], [2465, 8], [2548, 10], [2630.6, 13], [2714, 14], [2794, 12],
];
const yOf = (v: number) => 1204.5 - v * 5.5;
const timeTicks: [number, string][] = [[697, "2023"], [1185, "Jul"], [1683, "2024"], [2175, "Jul"], [2671, "2025"]];

function LineChart() {
  return (
    <section className="h-[309px] border-2 border-[#dfdfdf] bg-white">
      <h2 className="h-[55px] pt-4 pl-4 text-[28px] leading-10 font-semibold tracking-[0.4px] text-[#cb6d1c]">Incidents by Month, Year</h2>
      <svg className="block h-[245px] w-[2244px]" viewBox="618 1029 2244 245">
        <g stroke="#cacaca" strokeWidth="2">
          <path d="M686,1094 H2831.5 M686,1204 H2831.5" />
          {timeTicks.map(([x]) => (
            <path key={x} d={`M${x},1094 V1215`} />
          ))}
        </g>
        <g fill="#cb6d1c" fontSize="22">
          <text x="677.5" y="1096.5" textAnchor="end">20</text>
          <text x="678.5" y="1206.5" textAnchor="end">0</text>
          {timeTicks.map(([x, label]) => (
            <text key={x} x={x + 1} y="1243.5" textAnchor="middle">{label}</text>
          ))}
        </g>
        <polyline points={series.map(([x, v]) => `${x},${yOf(v)}`).join(" ")} fill="none" stroke="#cb6d1c" strokeWidth="5" strokeLinejoin="round" />
        {series.map(([x, v]) => (
          <circle key={x} cx={x} cy={yOf(v)} r="9" fill="#cb6d1c" />
        ))}
      </svg>
    </section>
  );
}

const bars: { top: number; opacity: number; label: string[] }[] = [
  { top: 1420, opacity: 1, label: ["Gas leak", "(natural gas", "or LPG)"] },
  { top: 1431.5, opacity: 1, label: ["HazMat", "release", "investigation", "w/no", "HazMat"] },
  { top: 1434, opacity: 1, label: ["False alarm", "or false call,", "or Dispatch", "Mistake"] },
  { top: 1435.2, opacity: 1, label: ["Good", "intent call,", "other"] },
  { top: 1435.2, opacity: 1, label: ["Smoke or", "odor", "removal"] },
  { top: 1436.2, opacity: 0.95, label: ["Smoke", "scare, odor", "of smoke"] },
  { top: 1437, opacity: 0.7, label: ["Dispatched", "and", "cancelled", "en route"] },
  { top: 1437, opacity: 0.22, label: ["Carbon", "monoxide", "incident"] },
  { top: 1437, opacity: 0.22, label: ["Hazardous", "condition,", "other"] },
  { top: 1437.8, opacity: 0.1, label: ["Gasoline or", "other", "flammable", "liquid spill"] },
];

function BarChart() {
  return (
    <section className="h-[305px] border-2 border-[#dfdfdf] bg-white">
      <div className="flex h-[55px] justify-between pt-4 pr-4 pl-4">
        <h2 className="text-[28px] leading-10 font-semibold tracking-[0.4px]">Top 10 Incident Type</h2>
        <svg className="mt-[7px]" width="30" height="30" viewBox="0 0 30 30" fill="none" stroke="#6a6a6a" strokeWidth="1.8">
          <circle cx="15" cy="15" r="13.6" />
          <path d="M12.5,12.8 H15.2 V22 M12,22.4 H18.2" />
          <circle cx="15" cy="8.6" r="1.6" fill="#6a6a6a" stroke="none" />
        </svg>
      </div>
      <svg className="block h-[245px] w-[2244px]" viewBox="618 1354 2244 245">
        {bars.map((b, i) => (
          <rect key={i} x={726.5 + i * 212.55} y={b.top} width="172" height={1438.4 - b.top} fill="#1c9fd1" fillOpacity={b.opacity} />
        ))}
        <g stroke="#cacaca" strokeWidth="2">
          <path d="M694,1419 H2831.5 M694,1439 H2831.5" />
          {Array.from({ length: 11 }, (_, i) => (
            <path key={i} d={`M${705 + Math.round(i * 212.55)},1419 V1439`} />
          ))}
          {bars.map((_, i) => (
            <path key={i} d={`M${811 + Math.round(i * 212.55)},1439 V1450`} />
          ))}
        </g>
        <g fill="#151515" fontSize="20.5">
          <text x="687" y="1420.5" textAnchor="end">100</text>
          <text x="687" y="1441" textAnchor="end">0</text>
          {bars.map((b, i) =>
            b.label.map((line, j) => (
              <text key={`${i}-${j}`} x={813 + i * 212.55} y={1468.5 + j * 25} textAnchor="middle" letterSpacing="0.15">
                {line}
              </text>
            )),
          )}
        </g>
      </svg>
    </section>
  );
}

export default function App() {
  return (
    <div className={clsx("flex h-[1612px] w-[2878px] gap-4 overflow-hidden bg-[#f8f8f8] pt-2.5 pl-4 text-[#151515]", FONT)}>
      <Sidebar />
      <main className="flex w-[2248px] shrink-0 flex-col gap-4">
        <div className="flex gap-4">
          <MapPanel />
          <div className="flex w-[1127px] flex-col gap-4">
            <Indicator />
            <IncidentTable />
          </div>
        </div>
        <LineChart />
        <BarChart />
      </main>
    </div>
  );
}
